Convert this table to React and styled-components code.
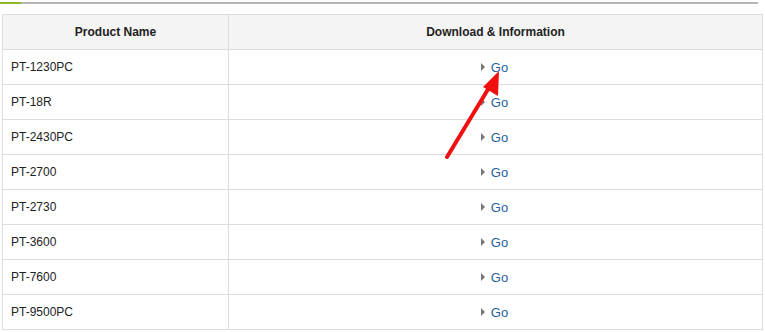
import React from 'react';
import styled, { createGlobalStyle } from 'styled-components';

const GlobalStyle = createGlobalStyle`
  body {
    margin: 0;
    background: #fff;
    font-family: "Liberation Sans", Arial, sans-serif;
  }
`;

const Page = styled.div`
  position: relative;
  width: 765px;
  height: 332px;
  overflow: hidden;
`;

const TabLine = styled.div`
  display: flex;
  margin: 2px 7px 0 0;
  height: 2px;
  background: #b5b5b5;
`;

const TabActive = styled.div`
  width: 21px;
  background: #8fb528;
`;

const Table = styled.table`
  margin: 10px 0 0 2px;
  width: 761px;
  border-collapse: collapse;
  font-size: 12px;
  color: #222;
`;

const HeadCell = styled.th`
  height: 34px;
  padding: 0;
  background: #f4f4f4;
  border: 1px solid #ddd;
  font-weight: bold;
  text-align: center;
  width: ${(p) => p.$width || 'auto'};
`;

const Cell = styled.td`
  height: 34px;
  padding: ${(p) => (p.$center ? '0' : '0 0 0 8px')};
  border: 1px solid #ddd;
  text-align: ${(p) => (p.$center ? 'center' : 'left')};
`;

const GoLink = styled.a`
  display: inline-flex;
  align-items: center;
  gap: 6px;
  margin-left: -2px;
  color: #1f5e9c;
  font-size: 13px;
  text-decoration: none;
  cursor: pointer;

  &::before {
    content: '';
    border-left: 4px solid #777;
    border-top: 4px solid transparent;
    border-bottom: 4px solid transparent;
  }
`;

const Pointer = styled.svg`
  position: absolute;
  left: 0;
  top: 0;
  pointer-events: none;
`;

const products = ['PT-1230PC', 'PT-18R', 'PT-2430PC', 'PT-2700', 'PT-2730', 'PT-3600', 'PT-7600', 'PT-9500PC'];

const App = () => {
  return (
    <Page>
      <GlobalStyle />
      <TabLine>
        <TabActive />
      </TabLine>
      <Table>
        <thead>
          <tr>
            <HeadCell $width="225px">Product Name</HeadCell>
            <HeadCell>Download &amp; Information</HeadCell>
          </tr>
        </thead>
        <tbody>
          {products.map((name) => (
            <tr key={name}>
              <Cell>{name}</Cell>
              <Cell $center>
                <GoLink>Go</GoLink>
              </Cell>
            </tr>
          ))}
        </tbody>
      </Table>
      <Pointer width="765" height="332" viewBox="0 0 765 332">
        <line x1="447" y1="157" x2="490" y2="86" stroke="#f01010" strokeWidth="4" strokeLinecap="round" />
        <polygon points="499,71 498,96 483,87" fill="#f01010" />
      </Pointer>
    </Page>
  );
};

export default App;
